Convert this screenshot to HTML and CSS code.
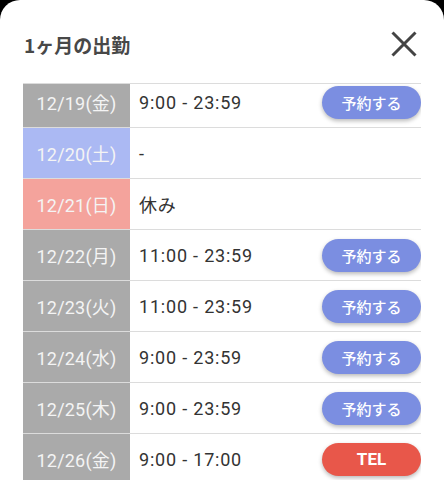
FILE: index.html
```html
<!DOCTYPE html>
<html lang="ja">
<head>
<meta charset="utf-8">
<title>1ヶ月の出勤</title>
<link rel="stylesheet" href="styles.css">
</head>
<body>
<div class="modal">
  <div class="header">
    <h2 class="title">1ヶ月の出勤</h2>
    <button class="close" aria-label="閉じる">
      <svg width="26" height="26" viewBox="0 0 26 26"><path d="M1.5 1.5 L24.5 24.5 M24.5 1.5 L1.5 24.5" stroke="#444" stroke-width="3" fill="none"/></svg>
    </button>
  </div>
  <div class="scroll">
    <div class="list">
      <div class="row"><div class="date">12/19(金)</div><div class="time">9:00 - 23:59</div><button class="btn">予約する</button></div>
      <div class="row"><div class="date sat">12/20(土)</div><div class="time">-</div></div>
      <div class="row"><div class="date sun">12/21(日)</div><div class="time">休み</div></div>
      <div class="row"><div class="date">12/22(月)</div><div class="time">11:00 - 23:59</div><button class="btn">予約する</button></div>
      <div class="row"><div class="date">12/23(火)</div><div class="time">11:00 - 23:59</div><button class="btn">予約する</button></div>
      <div class="row"><div class="date">12/24(水)</div><div class="time">9:00 - 23:59</div><button class="btn">予約する</button></div>
      <div class="row"><div class="date">12/25(木)</div><div class="time">9:00 - 23:59</div><button class="btn">予約する</button></div>
      <div class="row"><div class="date">12/26(金)</div><div class="time">9:00 - 17:00</div><button class="btn tel">TEL</button></div>
    </div>
  </div>
</div>
</body>
</html>
```
FILE: styles.css
```css
* { box-sizing: border-box; }
html, body { margin: 0; padding: 0; }
body {
  background: #000;
  font-family: Roboto, "Noto Sans CJK JP", sans-serif;
  width: 444px;
  height: 480px;
  overflow: hidden;
}
.modal {
  background: #fff;
  border-radius: 20px 20px 0 0;
  height: 480px;
  padding: 0 23px;
  display: flex;
  flex-direction: column;
}
.header {
  height: 83px;
  flex: none;
  display: flex;
  align-items: center;
  justify-content: space-between;
  padding: 5px 4px 0 1px;
}
.title {
  margin: 0;
  font-family: "Noto Sans CJK JP", sans-serif;
  font-size: 19px;
  font-weight: 700;
  color: #484848;
}
.close {
  border: 0;
  background: none;
  padding: 0;
  width: 26px;
  height: 26px;
  display: flex;
}
.scroll {
  flex: 1;
  border-top: 1px solid #dcdcdc;
  overflow: hidden;
}
.list {
  margin-top: -7px;
}
.row {
  display: flex;
  align-items: center;
  height: 51px;
  border-bottom: 1px solid #dcdcdc;
}
.date {
  width: 107px;
  align-self: stretch;
  flex: none;
  display: flex;
  align-items: center;
  justify-content: center;
  background: #aaaaaa;
  color: #f4f4f4;
  font-size: 18px;
  letter-spacing: 0.2px;
}
.date.sat { background: #abb9f3; }
.date.sun { background: #f4a39c; }
.time {
  flex: 1;
  padding-left: 9px;
  font-size: 18px;
  letter-spacing: 0.8px;
  color: #333;
}
.btn {
  flex: none;
  width: 99px;
  height: 33px;
  border: 0;
  border-radius: 17px;
  background: #7b8ee1;
  color: #fff;
  font-family: Roboto, "Noto Sans CJK JP", sans-serif;
  font-size: 15px;
  font-weight: 500;
  box-shadow: 0 2px 4px rgba(0,0,0,0.28);
  padding: 0;
}
.btn.tel {
  background: #e8574a;
  font-weight: 700;
  font-size: 17px;
}
```
